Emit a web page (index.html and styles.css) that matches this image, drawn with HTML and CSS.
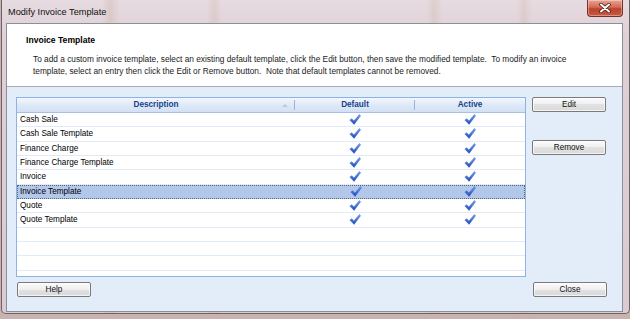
FILE: index.html
```html
<!DOCTYPE html>
<html lang="en">
<head>
    <meta charset="UTF-8">
    <title>Modify Invoice Template</title>
    <link rel="stylesheet" href="styles.css">
</head>
<body>
    <div class="window">
        <div class="titlebar">
            <span class="title">Modify Invoice Template</span>
            <button class="close-btn" title="Close">
                <svg width="14" height="10" viewBox="0 0 14 10">
                    <path d="M3 1.5 L11 8.5 M11 1.5 L3 8.5" stroke="#3a1410" stroke-width="3.4" stroke-linecap="round"/>
                    <path d="M3 1.5 L11 8.5 M11 1.5 L3 8.5" stroke="#fff" stroke-width="2" stroke-linecap="round"/>
                </svg>
            </button>
        </div>

        <div class="client">
            <div class="banner">
                <h1>Invoice Template</h1>
                <p>To add a custom invoice template, select an existing default template, click the Edit button, then save the modified template.&nbsp; To modify an invoice<br>template, select an entry then click the Edit or Remove button.&nbsp; Note that default templates cannot be removed.</p>
            </div>

            <div class="content">
                <div class="main">
                    <div class="grid">
                        <div class="grid-head">
                            <div class="hcell sorted">Description<span class="sort-arrow"></span></div>
                            <div class="hcell">Default</div>
                            <div class="hcell last">Active</div>
                        </div>
                        <div class="grid-body" id="rows"></div>
                    </div>
                    <div class="side">
                        <button class="btn">Edit</button>
                        <button class="btn remove">Remove</button>
                    </div>
                </div>
                <div class="footer">
                    <button class="btn help">Help</button>
                    <button class="btn">Close</button>
                </div>
            </div>
        </div>
    </div>

    <script>
        const templates = [
            "Cash Sale",
            "Cash Sale Template",
            "Finance Charge",
            "Finance Charge Template",
            "Invoice",
            "Invoice Template",
            "Quote",
            "Quote Template"
        ];
        const selected = "Invoice Template";
        const emptyRows = 4;

        const check = '<svg class="check" width="12" height="11" viewBox="0 0 12 11">' +
            '<defs><linearGradient id="g" x1="0" y1="0" x2="0" y2="1">' +
            '<stop offset="0" stop-color="#7aa6f2"/><stop offset="1" stop-color="#1c48bd"/></linearGradient></defs>' +
            '<path d="M0.8 6 L2.9 4.7 L4.9 7 L10.4 0.5 L11.6 1.7 L5.1 10.4 Z" fill="url(#g)" stroke="#2450c4" stroke-width="0.4"/></svg>';

        function renderRows() {
            const body = document.getElementById("rows");
            templates.forEach(name => {
                const row = document.createElement("div");
                row.className = "row" + (name === selected ? " selected" : "");
                row.innerHTML = '<div class="cell name">' + name + '</div>' +
                    '<div class="cell mark">' + check + '</div>' +
                    '<div class="cell mark">' + check + '</div>';
                body.appendChild(row);
            });
            for (let i = 0; i < emptyRows; i++) {
                const row = document.createElement("div");
                row.className = "row";
                body.appendChild(row);
            }
        }

        renderRows();
    </script>
</body>
</html>
```

FILE: styles.css
```css
body {
    margin: 0;
    padding: 0;
    width: 630px;
    height: 319px;
    overflow: hidden;
    background-color: #c9b3b1;
    font-family: "Liberation Sans", Arial, sans-serif;
    color: #000;
}
.window {
    box-sizing: border-box;
    width: 629px;
    height: 314px;
    margin-left: 1px;
    padding: 0 6px 1px 4px;
    display: flex;
    flex-direction: column;
    border: 1px solid #6f6167;
    border-top: none;
    border-radius: 0 0 5px 5px;
    background:
        linear-gradient(90deg, transparent 100px, rgba(190, 150, 120, 0.22) 108px, transparent 118px,
                        transparent 205px, rgba(190, 150, 120, 0.18) 212px, transparent 220px,
                        transparent 425px, rgba(190, 150, 120, 0.18) 432px, transparent 440px,
                        transparent 515px, rgba(190, 150, 120, 0.18) 522px, transparent 530px),
        linear-gradient(#e6dbe0, #ddd0d6 40px, #d9cbd2);
}
.titlebar {
    height: 23px;
    flex-shrink: 0;
    display: flex;
    align-items: flex-start;
    justify-content: space-between;
}
.title {
    font-size: 9.2px;
    line-height: 12px;
    margin-top: 6px;
    margin-left: 2px;
    color: #111;
}
.close-btn {
    width: 36px;
    height: 17px;
    padding: 0;
    border: 1px solid #74302a;
    border-top: none;
    border-radius: 0 0 4px 4px;
    background: linear-gradient(#e9a493, #d26a55 45%, #c0402b 55%, #c65a44);
    display: flex;
    align-items: center;
    justify-content: center;
    box-shadow: inset 0 0 0 1px rgba(255, 255, 255, 0.35);
}
.client {
    flex: 1;
    display: flex;
    flex-direction: column;
    border: 1px solid #8a8f99;
    background-color: #e3edf9;
}
.banner {
    height: 62px;
    flex-shrink: 0;
    background-color: #fff;
    border-bottom: 1px solid #a9adb3;
    padding-left: 19px;
}
.banner h1 {
    margin: 10px 0 0 0;
    font-size: 8.6px;
    line-height: 12px;
    font-weight: bold;
}
.banner p {
    margin: 8px 0 0 7px;
    font-size: 8.3px;
    line-height: 11.7px;
    color: #1a1a1a;
}
.content {
    flex: 1;
    padding: 10px 15px 0 9px;
}
.main {
    display: flex;
    gap: 6px;
}
.grid {
    box-sizing: border-box;
    width: 510px;
    height: 180px;
    border: 1px solid #8db2e3;
    background-color: #fff;
    overflow: hidden;
}
.grid-head, .row {
    display: grid;
    grid-template-columns: 278px 120px 1fr;
}
.grid-head {
    height: 14px;
    border-bottom: 1px solid #a5c0e5;
    background: linear-gradient(#f3f7fd, #dfe9f7 50%, #d2e1f4);
}
.hcell {
    position: relative;
    font-size: 8.2px;
    font-weight: bold;
    color: #15428b;
    text-align: center;
    line-height: 14px;
}
.hcell::after {
    content: "";
    position: absolute;
    right: 0;
    top: 2px;
    bottom: 2px;
    width: 1px;
    background-color: #97b4dd;
}
.hcell.last::after {
    display: none;
}
.sort-arrow {
    position: absolute;
    right: 7px;
    top: 6px;
    border-left: 3px solid transparent;
    border-right: 3px solid transparent;
    border-bottom: 3px solid #b5c9e6;
}
.row {
    box-sizing: border-box;
    height: 14.33px;
    border-bottom: 1px solid #e2eaf5;
}
.row.selected {
    background-color: #b3c7ea;
    border: 1px dotted #5a6373;
}
.cell {
    font-size: 8.2px;
    line-height: 13px;
}
.cell.name {
    padding-left: 3px;
}
.cell.mark {
    display: flex;
    justify-content: center;
    align-items: center;
}
.row.selected .cell.name {
    padding-left: 2px;
}
.row.selected .cell {
    line-height: 12px;
}
.check {
    display: block;
}
.side {
    display: flex;
    flex-direction: column;
}
.btn {
    box-sizing: border-box;
    width: 74px;
    height: 15px;
    padding: 0;
    border: 1px solid #7a7a7a;
    border-radius: 2px;
    background: linear-gradient(#fbfbfb, #efefef 50%, #e2e2e2 50%, #d9d9d9);
    font-family: "Liberation Sans", Arial, sans-serif;
    font-size: 8.2px;
    color: #111;
    box-shadow: inset 0 0 0 1px rgba(255, 255, 255, 0.7);
}
.btn.remove {
    margin-top: 28px;
}
.footer {
    display: flex;
    justify-content: space-between;
    margin-top: 5px;
}
.btn.help {
    margin-left: 1px;
}
```
